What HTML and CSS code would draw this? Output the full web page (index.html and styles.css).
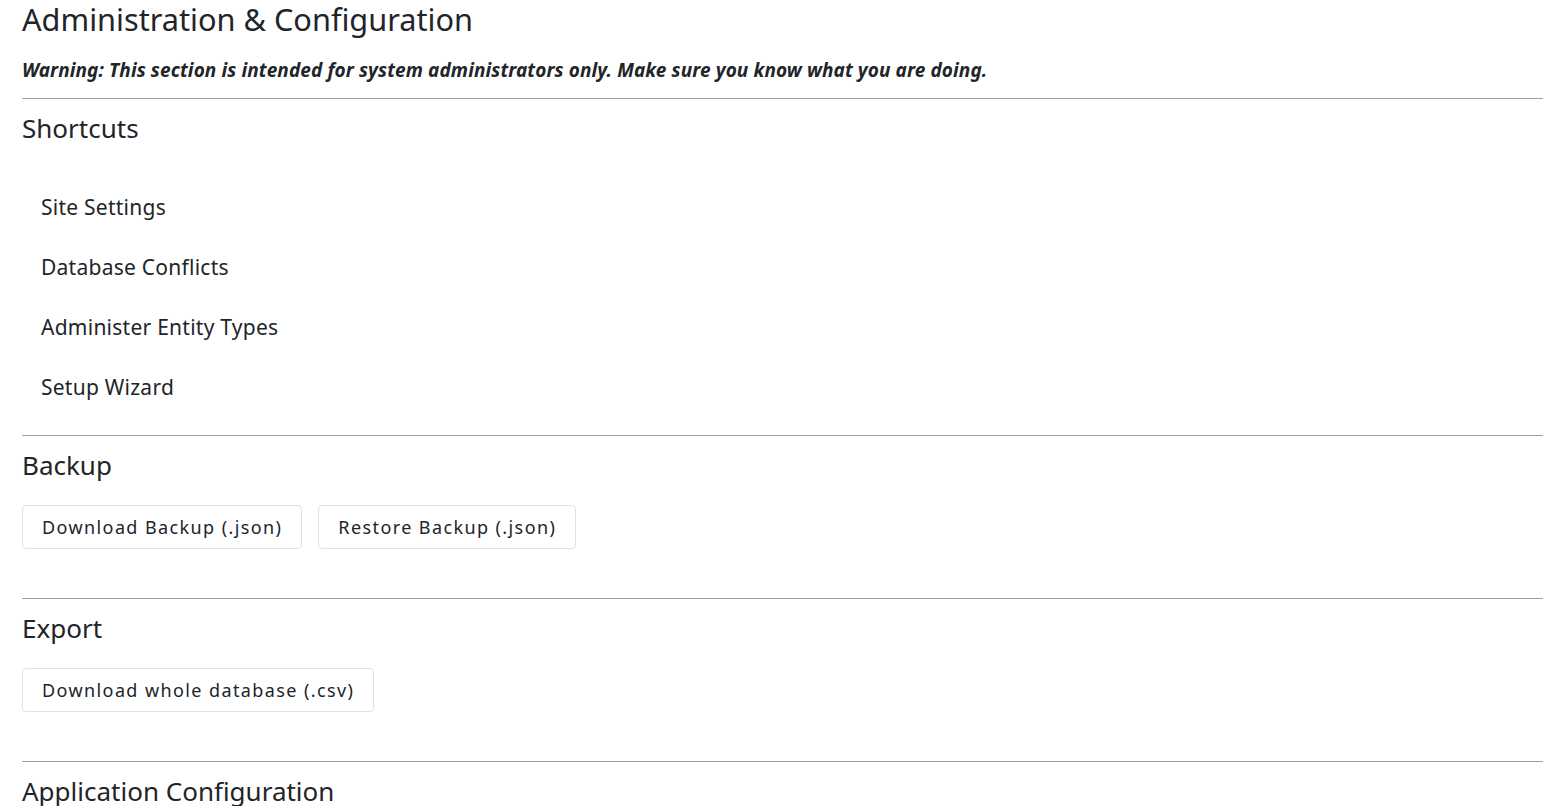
FILE: index.html
```html
<!DOCTYPE html>
<html lang="en">
<head>
<meta charset="utf-8">
<title>Administration &amp; Configuration</title>
<link rel="stylesheet" href="styles.css">
</head>
<body>
<main class="page">
  <h1 class="title">Administration &amp; Configuration</h1>
  <p class="warning">Warning: This section is intended for system administrators only. Make sure you know what you are doing.</p>

  <section class="section">
    <h2 class="section-title">Shortcuts</h2>
    <ul class="shortcuts">
      <li class="shortcut"><a href="#">Site Settings</a></li>
      <li class="shortcut"><a href="#">Database Conflicts</a></li>
      <li class="shortcut"><a href="#">Administer Entity Types</a></li>
      <li class="shortcut"><a href="#">Setup Wizard</a></li>
    </ul>
  </section>

  <section class="section">
    <h2 class="section-title">Backup</h2>
    <div class="actions">
      <button class="btn">Download Backup (.json)</button>
      <button class="btn">Restore Backup (.json)</button>
    </div>
  </section>

  <section class="section">
    <h2 class="section-title">Export</h2>
    <div class="actions">
      <button class="btn">Download whole database (.csv)</button>
    </div>
  </section>

  <section class="section">
    <h2 class="section-title">Application Configuration</h2>
  </section>
</main>
</body>
</html>
```

FILE: styles.css
```css
html, body {
  margin: 0;
  padding: 0;
  background: #ffffff;
}

body {
  font-family: "Noto Sans", "Open Sans", sans-serif;
  color: #212529;
}

.page {
  padding: 0 0 0 22px;
}

.title {
  margin: 0;
  font-size: 30.7px;
  font-weight: 400;
  line-height: 38px;
}

.warning {
  margin: 20px 0 0;
  font-size: 19px;
  font-weight: 700;
  font-style: italic;
  line-height: 24px;
  letter-spacing: 0.1px;
}

.section {
  border-top: 1px solid #a0a0a0;
  margin-top: 16px;
}

.section-title {
  margin: 15px 0 0;
  font-size: 26px;
  font-weight: 400;
  line-height: 29px;
}

.shortcuts {
  list-style: none;
  margin: 34px 0 18px;
  padding: 0;
}

.shortcut {
  height: 60px;
  display: flex;
  align-items: center;
  padding-left: 19px;
}

.shortcut a {
  color: #212529;
  text-decoration: none;
  font-size: 21px;
  letter-spacing: 0.25px;
}

.actions {
  display: flex;
  gap: 16px;
  margin: 25px 0 49px;
}

.btn {
  font-family: inherit;
  font-size: 18px;
  letter-spacing: 1.4px;
  color: #212529;
  background: #ffffff;
  border: 1px solid #dee2e6;
  border-radius: 4px;
  height: 44px;
  padding: 0 19px;
}
```
